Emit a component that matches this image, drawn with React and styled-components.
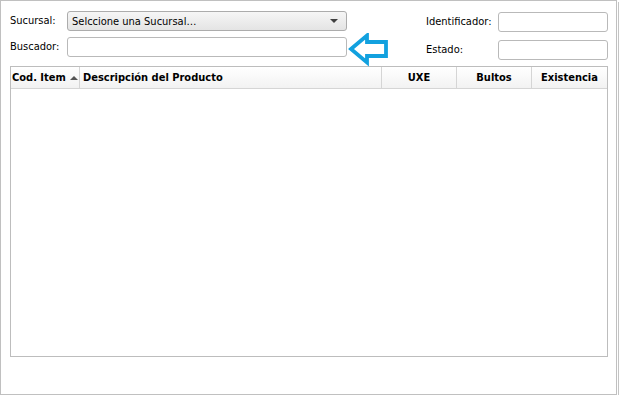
import React from "react";
import styled, { createGlobalStyle } from "styled-components";

const Global = createGlobalStyle`
  html, body { margin: 0; padding: 0; background: #fff; }
  body { font-family: "DejaVu Sans Condensed", "DejaVu Sans", sans-serif; font-size: 11px; color: #000; }
  * { box-sizing: border-box; }
`;

const Frame = styled.div`
  width: 617px;
  height: 395px;
  border: 1px solid #c0c0c0;
  background: #fff;
  box-shadow: 1px 1px 0 0 #fff, 2px 2px 0 0 #c4c4c4;
  padding: 10px 0 0 9px;
  display: flex;
  flex-direction: column;
`;

const TopArea = styled.div`
  height: 55px;
  display: flex;
  align-items: flex-start;
`;

const FormGrid = styled.div`
  display: grid;
  grid-template-columns: ${(p) => p.$label}px ${(p) => p.$field}px;
  grid-auto-rows: 20px;
  row-gap: ${(p) => p.$gap}px;
  align-items: center;
  margin-top: ${(p) => p.$top || 0}px;
  margin-left: ${(p) => p.$left || 0}px;
`;

const Label = styled.span`
  white-space: nowrap;
  line-height: 20px;
`;

const Select = styled.div`
  height: 20px;
  border: 1px solid #acacac;
  border-radius: 3px;
  background: linear-gradient(#f6f6f6, #e4e4e4);
  display: flex;
  align-items: center;
  justify-content: space-between;
  padding: 0 8px 0 4px;
  white-space: nowrap;
`;

const Caret = styled.span`
  width: 0;
  height: 0;
  border-left: 4px solid transparent;
  border-right: 4px solid transparent;
  border-top: 4px solid #404040;
`;

const FieldWrap = styled.div`
  position: relative;
  height: 20px;
`;

const Input = styled.div`
  height: 20px;
  border: 1px solid #b9b9b9;
  border-radius: 3px;
  background: #fff;
`;

const ArrowMark = styled.svg`
  position: absolute;
  left: 281px;
  top: -4px;
`;

const Table = styled.div`
  width: 598px;
  height: 291px;
  border: 1px solid #bdbdbd;
  background: #fff;
`;

const HeaderRow = styled.div`
  display: grid;
  grid-template-columns: 69px 302px 75px 75px 75px;
  height: 22px;
  border-bottom: 1px solid #d5d5d5;
`;

const HeaderCell = styled.div`
  display: flex;
  align-items: center;
  justify-content: ${(p) => (p.$center ? "center" : "flex-start")};
  padding-left: ${(p) => (p.$center ? 0 : p.$pad)}px;
  border-right: ${(p) => (p.$last ? "none" : "1px solid #d5d5d5")};
  background: linear-gradient(#ffffff, #f2f2f2);
  font-weight: bold;
  font-size: 11px;
  white-space: nowrap;
  gap: 4px;
`;

const SortUp = styled.span`
  width: 0;
  height: 0;
  border-left: 4px solid transparent;
  border-right: 4px solid transparent;
  border-bottom: 4px solid #555;
`;

export default function App() {
  return (
    <>
      <Global />
      <Frame>
        <TopArea>
          <FormGrid $label={57} $field={280} $gap={6}>
            <Label>Sucursal:</Label>
            <Select>
              <span>Selccione una Sucursal…</span>
              <Caret />
            </Select>
            <Label>Buscador:</Label>
            <FieldWrap>
              <Input />
              <ArrowMark width="42" height="34" viewBox="0 0 42 34">
                <path
                  d="M3 16 L19 2.5 L19 9 L38 9 L38 23 L19 23 L19 29.5 Z"
                  fill="none"
                  stroke="#12a1df"
                  strokeWidth="3.8"
                  strokeLinejoin="miter"
                />
              </ArrowMark>
            </FieldWrap>
          </FormGrid>
          <FormGrid $label={72} $field={110} $gap={8} $top={1} $left={79}>
            <Label>Identificador:</Label>
            <Input />
            <Label>Estado:</Label>
            <Input />
          </FormGrid>
        </TopArea>
        <Table>
          <HeaderRow>
            <HeaderCell $pad={1}>
              Cod. Item <SortUp />
            </HeaderCell>
            <HeaderCell $pad={3}>Descripción del Producto</HeaderCell>
            <HeaderCell $center>UXE</HeaderCell>
            <HeaderCell $center>Bultos</HeaderCell>
            <HeaderCell $center $last>
              Existencia
            </HeaderCell>
          </HeaderRow>
        </Table>
      </Frame>
    </>
  );
}
